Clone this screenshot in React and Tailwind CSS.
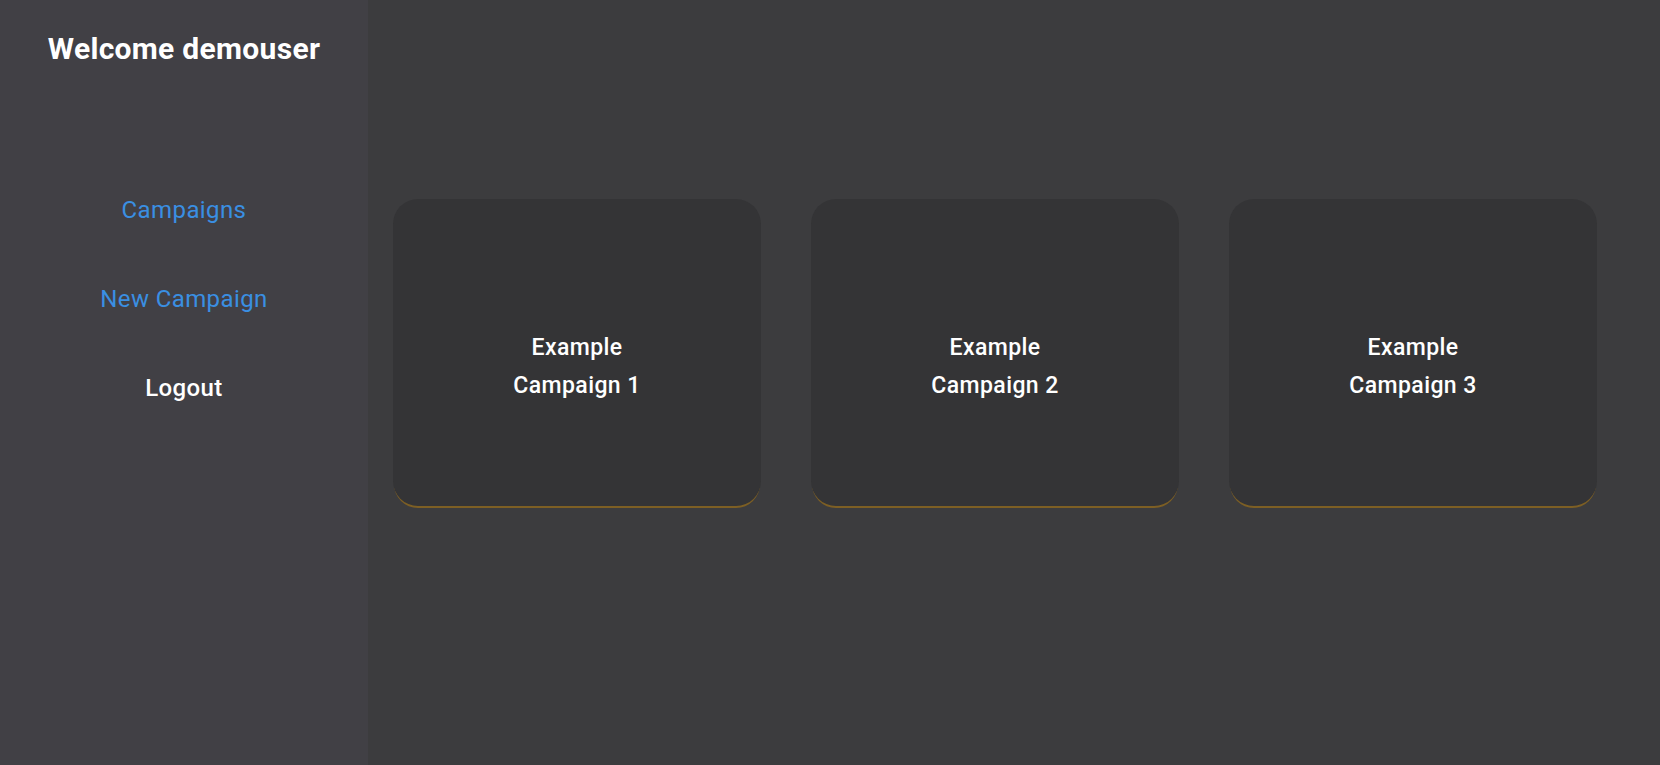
const campaigns = ["Campaign 1", "Campaign 2", "Campaign 3"];

export default function App() {
  return (
    <div
      className="flex w-full h-[765px] bg-[#3c3c3e] text-white"
      style={{ fontFamily: "Roboto, 'Liberation Sans', sans-serif" }}
    >
      {/* Sidebar */}
      <aside className="w-[368px] shrink-0 h-full bg-[#414045] flex flex-col items-center">
        <h1 className="mt-[31px] text-[30px] leading-[36px] font-bold tracking-[0.3px]">
          Welcome demouser
        </h1>
        <nav className="mt-[128px] flex flex-col items-center gap-[58px] text-[24px] leading-[31px]">
          <a className="text-[#3a8fe2] tracking-[0.4px]">Campaigns</a>
          <a className="text-[#3a8fe2] tracking-[0.4px]">New Campaign</a>
          <a className="text-white font-medium tracking-[0.4px]">Logout</a>
        </nav>
      </aside>

      {/* Campaign cards */}
      <main className="flex-1 pt-[199px] pl-[25px]">
        <div className="flex gap-[50px]">
          {campaigns.map((c) => (
            <div
              key={c}
              className="w-[368px] h-[307px] rounded-[25px] bg-[#343436] shadow-[0_3px_0_-1px_#7d5f24] flex flex-col items-center justify-center pt-[28px] text-[23px] leading-[38px] font-medium tracking-[0.4px] text-center"
            >
              <span>Example</span>
              <span>{c}</span>
            </div>
          ))}
        </div>
      </main>
    </div>
  );
}
